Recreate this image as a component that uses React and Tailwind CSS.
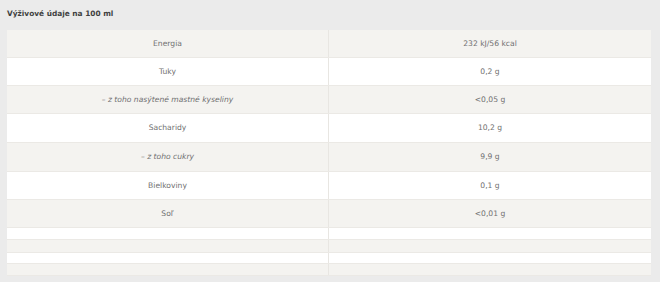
const rows = [
  { label: 'Energia', value: '232 kJ/56 kcal', h: 'h-[28px]' },
  { label: 'Tuky', value: '0,2 g', h: 'h-[28px]' },
  { label: '– z toho nasýtené mastné kyseliny', value: '<0,05 g', h: 'h-[28px]', italic: true },
  { label: 'Sacharidy', value: '10,2 g', h: 'h-[29px]' },
  { label: '– z toho cukry', value: '9,9 g', h: 'h-[29px]', italic: true },
  { label: 'Bielkoviny', value: '0,1 g', h: 'h-[28px]' },
  { label: 'Soľ', value: '<0,01 g', h: 'h-[28px]' },
  { label: '', value: '', h: 'h-[12px]' },
  { label: '', value: '', h: 'h-[13px]' },
  { label: '', value: '', h: 'h-[11px]' },
  { label: '', value: '', h: 'h-[12px]' },
]

export default function App() {
  return (
    <div className="w-[660px] h-[282px] bg-[#ebebeb] px-[7px] pt-[7px] font-['DejaVu_Sans',sans-serif] overflow-hidden">
      <h2 className="h-[23px] text-[7.4px] font-bold text-[#3f3f3f] leading-[14px]">
        Výživové údaje na 100 ml
      </h2>

      {/* Table */}
      <div className="w-[644px] flex flex-col">
        {rows.map((r, i) => (
          <div
            key={i}
            className={`grid grid-cols-[322px_322px] ${r.h} border-b border-[#ebe9e5] ${i % 2 === 0 ? 'bg-[#f4f3f0]' : 'bg-white'}`}
          >
            <div className={`flex items-center justify-center border-r border-[#e8e6e2] text-[7.6px] text-[#707070] ${r.italic ? 'italic' : ''}`}>
              {r.label}
            </div>
            <div className="flex items-center justify-center text-[7.6px] text-[#707070]">
              {r.value}
            </div>
          </div>
        ))}
      </div>
    </div>
  )
}
